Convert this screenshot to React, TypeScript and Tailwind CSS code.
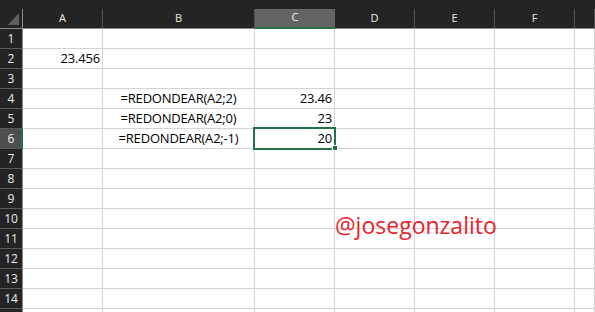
import React from "react";

const cols = [
  { l: "A", w: "w-[80px]" },
  { l: "B", w: "w-[152px]" },
  { l: "C", w: "w-[80px]" },
  { l: "D", w: "w-[80px]" },
  { l: "E", w: "w-[80px]" },
  { l: "F", w: "w-[80px]" },
  { l: "", w: "flex-1" },
];

type Cell = { t: string; align: "r" | "c" };
const data: Record<number, Record<number, Cell>> = {
  2: { 0: { t: "23.456", align: "r" } },
  4: { 1: { t: "=REDONDEAR(A2;2)", align: "c" }, 2: { t: "23.46", align: "r" } },
  5: { 1: { t: "=REDONDEAR(A2;0)", align: "c" }, 2: { t: "23", align: "r" } },
  6: { 1: { t: "=REDONDEAR(A2;-1)", align: "c" }, 2: { t: "20", align: "r" } },
};

const font = { fontFamily: '"Open Sans", "Liberation Sans", sans-serif' };

export default function App() {
  const rows = Array.from({ length: 15 }, (_, i) => i + 1);
  return (
    <div className="relative w-[595px] h-[312px] overflow-hidden bg-white" style={font}>
      {/* header */}
      <div className="flex h-[29px] bg-[#242424]">
        <div className="w-[23px] h-[29px] flex flex-col border-b border-[#8a8a8a]">
          <div className="h-[9px]" />
          <div className="flex-1 border-r border-[#8a8a8a] relative">
            <svg className="absolute left-[8px] top-[3px]" width="12" height="14" viewBox="0 0 12 14">
              <polygon points="0,13 11,13 11,1" fill="#5e5e5e" />
            </svg>
          </div>
        </div>
        {cols.map((c) =>
          c.l === "C" ? (
            <div key={c.l} className={`${c.w} h-[29px] flex flex-col`}>
              <div className="h-[9px]" />
              <div className="h-[20px] bg-[#646464] border-b-2 border-[#217346] flex items-center justify-center text-[11px] text-[#f2f2f2] pb-[1px]">
                {c.l}
              </div>
            </div>
          ) : (
            <div key={c.l || "g"} className={`${c.w} h-[29px] flex flex-col border-b border-[#8a8a8a]`}>
              <div className="h-[9px]" />
              <div className="flex-1 border-r border-[#555555] flex items-center justify-center text-[11px] text-[#ececec]">
                {c.l}
              </div>
            </div>
          )
        )}
      </div>
      {/* rows */}
      {rows.map((r) => (
        <div key={r} className="flex h-[20px]">
          {r === 6 ? (
            <div className="w-[23px] h-[20px] bg-[#4e4e4e] border-r-2 border-r-[#217346] border-b border-b-[#5a5a5a] flex items-center justify-center text-[12px] text-[#f2f2f2] pl-[1px]">
              {r}
            </div>
          ) : (
            <div className="w-[23px] h-[20px] bg-[#242424] border-r border-r-[#8a8a8a] border-b border-b-[#5a5a5a] flex items-center justify-center text-[12px] text-[#ececec]">
              {r < 15 ? r : ""}
            </div>
          )}
          {cols.map((c, ci) => {
            const cell = data[r]?.[ci];
            return (
              <div
                key={ci}
                className={`${c.w} h-[20px] border-r border-b border-[#d4d4d4] px-[2px] text-[13px] leading-[19px] text-black tracking-[-0.2px] whitespace-nowrap overflow-visible ${
                  cell?.align === "c" ? "text-center" : "text-right"
                }`}
              >
                {cell?.t ?? ""}
              </div>
            );
          })}
        </div>
      ))}
      {/* selection */}
      <div className="absolute left-[253px] top-[127px] w-[83px] h-[23px] border-2 border-[#217346]" />
      <div className="absolute left-[332px] top-[145px] w-[6px] h-[6px] bg-[#217346] border border-white" />
      {/* watermark */}
      <div className="absolute left-[335px] top-[214px] text-[23px] leading-[23px] text-[#e8232b]">
        @josegonzalito
      </div>
    </div>
  );
}
